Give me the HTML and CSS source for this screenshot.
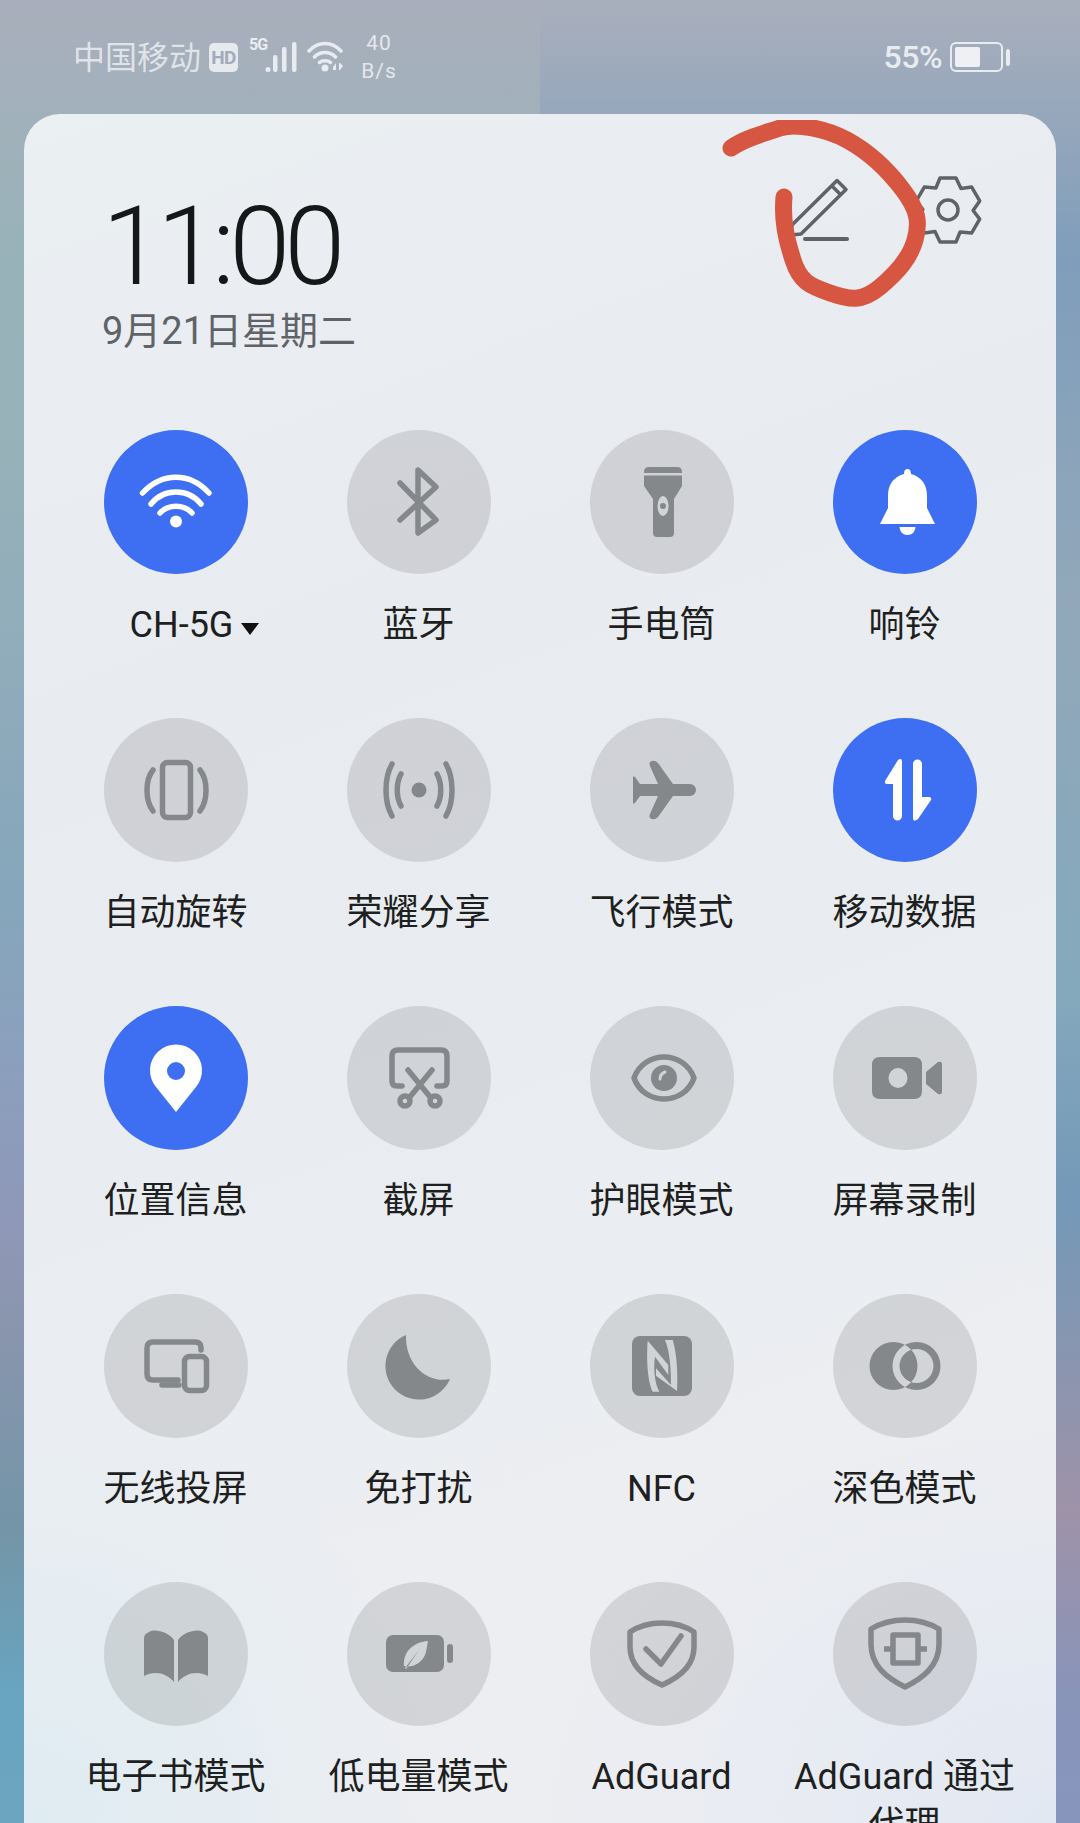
FILE: index.html
```html
<!DOCTYPE html>
<html>
<head>
  <title>控制中心</title>
  <link rel="stylesheet" href="styles.css">
</head>
<body>
  <div class="screen">
    <div class="status-bar">
      <span class="carrier">中国移动</span>
      <span class="hd">HD</span>
      <span class="net">5G</span>
      <svg class="signal" viewBox="0 0 32 32"><circle cx="3" cy="28.5" r="2.5"/><rect x="8" y="14" width="4.5" height="17" rx="2"/><rect x="17" y="6" width="4.5" height="25" rx="2"/><rect x="27" y="1" width="4.5" height="30" rx="2"/></svg>
      <svg class="wifi" viewBox="0 0 36 32"><path class="s-line" d="M2 10C11 0 25 0 34 10M7.500 16C13 10 23 10 28.500 16M12.500 21.500C15 19 21 19 23.500 21.500"/><circle cx="18" cy="27" r="3.500"/><path d="M26 26l3-4v7h-3zM32 22h1l3 3-3 4h-1z"/></svg>
      <span class="speed">40<br>B/s</span>
      <span class="right">
        <span class="percent">55%</span>
        <span class="battery"><span class="battery-level"></span></span>
        <span class="battery-tip"></span>
      </span>
    </div>

    <div class="panel">
      <div class="panel-head">
        <div class="clock">
          <div class="time">11:00</div>
          <div class="date">9月21日星期二</div>
        </div>
        <div class="tools">
          <svg class="tool" viewBox="0 0 72 72"><path d="M52 6.500L61 15.500 16 60 6 61 7 51ZM47 12L55.500 20.500"/><path class="thick" d="M20 65H62"/></svg>
          <svg class="tool" viewBox="-36 -36 72 72"><path d="M-8 -32H8L13 -21.500 23.700 -22.900 31.700 -9.100 25.100 .5 31.700 9.100 23.700 22.900 12.100 22 8 32H-8L-13 21.500 -23.700 22.900 -31.700 9.100 -25.100 -.5 -31.700 -9.100 -23.700 -22.900 -12.100 -22Z"/><circle r="10"/></svg>
        </div>
      </div>

      <div class="tiles">
        <div class="tile">
          <div class="btn on"><svg viewBox="0 0 144 144"><path class="line" d="M38.500 63C58 42 86 42 105 63M47 74C60 58 84 58 97 74M56 83C64 74 80 74 88 83"/><circle class="fill" cx="72" cy="91.500" r="6"/></svg></div>
          <div class="label wifi-label">CH-5G<span class="caret"></span></div>
        </div>
        <div class="tile">
          <div class="btn"><svg viewBox="0 0 144 144"><path class="line" d="M53 53L89 90 71 103V40L89 57 53 90"/></svg></div>
          <div class="label">蓝牙</div>
        </div>
        <div class="tile">
          <div class="btn"><svg viewBox="0 0 144 144"><path class="fill" d="M59 37H87Q92 37 92 42V43H54V42Q54 37 59 37ZM54 45.500H92V56L84 69V103Q84 107 80 107H67Q63 107 63 103V69L54 56Z"/><ellipse class="hole" cx="73" cy="76" rx="5.500" ry="10"/><circle class="fill" cx="73" cy="76" r="3"/></svg></div>
          <div class="label">手电筒</div>
        </div>
        <div class="tile">
          <div class="btn on"><svg viewBox="0 0 144 144"><path class="fill" d="M74.500 39Q78 39 78 44C89 47 94 55 94 66V78L102 94H47L55 78V66C55 55 60 47 71 44Q71 39 74.500 39Z"/><path class="fill" d="M66.500 97H82.500C82 102 79 105 74.500 105S67 102 66.500 97Z"/></svg></div>
          <div class="label">响铃</div>
        </div>

        <div class="tile">
          <div class="btn"><svg viewBox="0 0 144 144"><rect class="line" x="58.500" y="44.500" width="28" height="55" rx="5"/><path class="line" d="M49 52C41 62 41 82 49 93M96 52C104 62 104 82 96 93"/></svg></div>
          <div class="label">自动旋转</div>
        </div>
        <div class="tile">
          <div class="btn"><svg viewBox="0 0 144 144"><circle class="fill" cx="72" cy="72" r="7.500"/><path class="line" d="M54 56C49 65 49 79 54 88M90 56C95 65 95 79 90 88M45 46C37 60 37 84 45 98M99 46C107 60 107 84 99 98"/></svg></div>
          <div class="label">荣耀分享</div>
        </div>
        <div class="tile">
          <div class="btn"><svg viewBox="0 0 144 144"><path class="fill" d="M100 66A6 6 0 0 1 100 78H83L68 99Q64 103 60 100Q59 98 60 96L68 78H50L45 85Q43 87 43 84V60Q43 57 45 59L50 66H68L60 48Q59 45 60 44Q64 41 68 45L83 66Z"/></svg></div>
          <div class="label">飞行模式</div>
        </div>
        <div class="tile">
          <div class="btn on"><svg viewBox="0 0 144 144"><path class="fill" d="M69 44V98A4.500 4.500 0 0 1 60 98V66H54Q51 66 52 63L65 42Q69 39 69 44ZM80 46A4.500 4.500 0 0 1 89 46V79H96Q99 79 98 82L85 101Q80 105 80 100Z"/></svg></div>
          <div class="label">移动数据</div>
        </div>

        <div class="tile">
          <div class="btn on"><svg viewBox="0 0 144 144"><path class="fill" fill-rule="evenodd" d="M72 106L52 81A26 26 0 1 1 92 81ZM72 56A9 9 0 1 0 72 74A9 9 0 1 0 72 56Z"/></svg></div>
          <div class="label">位置信息</div>
        </div>
        <div class="tile">
          <div class="btn"><svg viewBox="0 0 144 144"><path class="line" d="M55 80H50Q45 80 45 75V50Q45 44 51 44H94Q100 44 100 50V75Q100 80 95 80H90"/><path class="line" d="M61 64L84 92M85 64L62 92"/><circle class="line" cx="58" cy="95" r="5"/><circle class="line" cx="88" cy="95" r="5"/></svg></div>
          <div class="label">截屏</div>
        </div>
        <div class="tile">
          <div class="btn"><svg viewBox="0 0 144 144"><path class="line" d="M44 72C54 44 94 44 104 72C94 100 54 100 44 72Z"/><circle class="fill" cx="74" cy="72" r="13"/><path class="hole-line" d="M70 73Q70 68 75 66"/></svg></div>
          <div class="label">护眼模式</div>
        </div>
        <div class="tile">
          <div class="btn"><svg viewBox="0 0 144 144"><path class="fill" fill-rule="evenodd" d="M47 51H81Q89 51 89 59V85Q89 93 81 93H47Q39 93 39 85V59Q39 51 47 51ZM65 62A9.500 10 0 1 0 65 82A9.500 10 0 1 0 65 62Z"/><path class="fill" d="M93 66L105 56Q109 55 109 58V86Q109 89 105 88L93 78Z"/></svg></div>
          <div class="label">屏幕录制</div>
        </div>

        <div class="tile">
          <div class="btn"><svg viewBox="0 0 144 144"><path class="line" d="M97 56V54Q97 48 91 48H49Q43 48 43 54V80Q43 86 49 86H74"/><path class="line" d="M58 91H75"/><rect class="line" x="80.500" y="62.500" width="22" height="34" rx="5"/></svg></div>
          <div class="label">无线投屏</div>
        </div>
        <div class="tile">
          <div class="btn"><svg viewBox="0 0 144 144"><path class="fill" d="M59 41A33.600 33.600 0 1 0 103 85C82 90 58 72 59 41Z"/></svg></div>
          <div class="label">免打扰</div>
        </div>
        <div class="tile">
          <div class="btn"><svg viewBox="0 0 144 144"><rect class="fill" x="42" y="42" width="60" height="60" rx="8"/><path class="hole" d="M57.700 46.700L78.300 71V81L65 62.700C63.500 72 64 88 69.300 97.700H62.700C57 86 56.500 62 57.700 46.700ZM66 74.300L81 91C81 75 80 58 75 46H82.700C87 60 88 80 87 97L66 81.700Z"/></svg></div>
          <div class="label">NFC</div>
        </div>
        <div class="tile">
          <div class="btn"><svg viewBox="0 0 144 144"><path class="fill" fill-rule="evenodd" d="M60.500 48A24 24 0 1 0 60.500 96A24 24 0 1 0 60.500 48ZM83.500 48A24 24 0 1 0 83.500 96A24 24 0 1 0 83.500 48ZM83.500 55A17 17 0 1 0 83.500 89A17 17 0 1 0 83.500 55Z"/></svg></div>
          <div class="label">深色模式</div>
        </div>

        <div class="tile">
          <div class="btn"><svg viewBox="0 0 144 144"><path class="fill" d="M70 58C65 50 50 46 45 50Q40 52 40 56V94C50 88 63 91 70 100ZM74 58C79 50 94 46 99 50Q104 52 104 56V94C94 88 81 91 74 100Z"/></svg></div>
          <div class="label">电子书模式</div>
        </div>
        <div class="tile">
          <div class="btn"><svg viewBox="0 0 144 144"><rect class="fill" x="39" y="53" width="58" height="37" rx="7"/><rect class="fill" x="100" y="62" width="6" height="19" rx="3"/><path class="hole" d="M81 59C68 60 56 68 57 84C64 86 76 82 79 70ZM58 86L72 68 59 87Z"/></svg></div>
          <div class="label">低电量模式</div>
        </div>
        <div class="tile">
          <div class="btn"><svg viewBox="0 0 144 144"><path class="line" d="M40 50C58 38 86 38 104 50V65C104 85 88 96 72 103C56 96 40 85 40 65Z"/><path class="line" d="M56 67L71 82 91 54"/></svg></div>
          <div class="label">AdGuard</div>
        </div>
        <div class="tile">
          <div class="btn"><svg viewBox="0 0 144 144"><path class="line" d="M38 47C58 35 86 35 106 47V62C106 84 90 96 72 105C54 96 38 84 38 62Z"/><rect class="line" x="60" y="53" width="25" height="28"/><path class="line flat" d="M51 67H60M85 67H94"/></svg></div>
          <div class="label">AdGuard 通过代理</div>
        </div>
      </div>
    </div>

    <!-- hand drawn mark on the screenshot -->
    <svg class="scribble" viewBox="720 120 210 190"><path d="M731 148C745 138 765 133 780 128S825 128 847 140S888 170 903 190S920 222 915 240S898 272 880 287S850 300 830 293S800 282 793 260S782 220 784 197"/></svg>
  </div>
</body>
</html>
```

FILE: styles.css
```css
html, body {
  margin: 0;
  height: 100%;
}

body {
  font-family: Roboto, "Noto Sans CJK SC", sans-serif;
  overflow: hidden;
}

.screen {
  position: relative;
  width: 1080px;
  height: 1823px;
  display: flex;
  flex-direction: column;
  overflow: hidden;
  background:
    linear-gradient(180deg, #a9afbc 0, rgba(169, 175, 188, 0) 260px),
    linear-gradient(180deg, #97b2b8 0, #97b2b8 420px, #8fabbb 700px, #85a6bb 900px, #8ba0bd 1050px, #8f98b8 1220px, #8a95ae 1320px, #7495a7 1530px, #69a4c0 1690px, #6ba5c0 100%) left / 540px 100% no-repeat,
    linear-gradient(180deg, #7f9dbb 0, #7f9dbb 250px, #92a8ba 600px, #85a9bc 980px, #7499b8 1200px, #9e92a8 1510px, #8994b9 1695px, #8795bd 100%) right / 540px 100% no-repeat;
}

.status-bar {
  height: 114px;
  flex: none;
  box-sizing: border-box;
  padding: 0 70px 0 73px;
  display: flex;
  align-items: center;
  color: rgba(255, 255, 255, 0.78);
}

.carrier {
  font-size: 32px;
  line-height: 40px;
  margin-top: 1px;
  color: rgba(255, 255, 255, 0.66);
}

.hd {
  width: 29px;
  height: 29px;
  margin-left: 8px;
  border-radius: 5px;
  background: #e6e9ee;
  color: #a1abba;
  font-size: 19px;
  font-weight: 700;
  line-height: 29px;
  text-align: center;
  letter-spacing: -0.5px;
}

.net {
  font-size: 16px;
  font-weight: 700;
  line-height: 16px;
  margin: -24px 0 0 11px;
  width: 17px;
  letter-spacing: -1px;
}

.signal {
  width: 32px;
  height: 32px;
  margin-left: -1px;
  fill: #e8ebef;
}

.wifi {
  width: 36px;
  height: 32px;
  margin-left: 10px;
  fill: #e8ebef;
}

.s-line {
  fill: none;
  stroke: #e8ebef;
  stroke-width: 3.500;
  stroke-linecap: round;
}

.speed {
  width: 50px;
  margin-left: 11px;
  font-size: 21px;
  line-height: 28px;
  text-align: center;
  letter-spacing: 1px;
  color: #e4e7ec;
}

.right {
  margin-left: auto;
  display: flex;
  align-items: center;
}

.percent {
  font-size: 32px;
  font-weight: 500;
  color: #e8ebef;
  margin-right: 8px;
  letter-spacing: -0.5px;
}

.battery {
  width: 53px;
  height: 30px;
  box-sizing: border-box;
  border: 2.500px solid #e8ebef;
  border-radius: 6px;
  padding: 3px;
}

.battery-level {
  display: block;
  width: 25px;
  height: 100%;
  border-radius: 2px;
  background: #eef0f4;
}

.battery-tip {
  width: 4px;
  height: 17px;
  margin-left: 3px;
  border-radius: 2px;
  background: #e8ebef;
}

.panel {
  flex: 1;
  margin: 0 24px;
  border-radius: 36px 36px 0 0;
  overflow: hidden;
  background:
    radial-gradient(420px 420px at 0 100%, #dfecf2 0, rgba(223, 236, 242, 0) 100%),
    radial-gradient(520px 400px at 100% 100%, #e2e8f2 0, rgba(226, 232, 242, 0) 100%),
    linear-gradient(160deg, #ebf0f3 0, #e8ebf0 30%, #e9edf1 55%, #eceef2 78%, #eeeef2 100%);
}

.panel-head {
  height: 316px;
  box-sizing: border-box;
  padding: 60px 72px 0 78px;
  display: flex;
  justify-content: space-between;
}

.time {
  margin-top: 14px;
  font-size: 110px;
  font-weight: 300;
  line-height: 118px;
  letter-spacing: -6px;
  color: #161718;
}

.date {
  margin-top: 0;
  font-size: 38px;
  line-height: 50px;
  color: #5f6367;
}

.tools {
  display: flex;
  gap: 55px;
}

.tool {
  width: 72px;
  height: 72px;
  fill: none;
  stroke: #5f6266;
  stroke-width: 3.500;
  stroke-linejoin: round;
}

.thick {
  stroke-width: 4;
  stroke-linecap: round;
}

.tiles {
  padding-left: 30px;
  display: grid;
  grid-template-columns: repeat(4, 243px);
  grid-auto-rows: 288px;
}

.tile {
  display: flex;
  flex-direction: column;
  align-items: center;
}

.btn {
  width: 144px;
  height: 144px;
  border-radius: 50%;
  background: rgba(60, 60, 60, 0.14);
}

.btn svg {
  display: block;
  width: 144px;
  height: 144px;
}

.fill {
  fill: #85888a;
}

.hole {
  fill: #d1d4d6;
}

.hole-line {
  fill: none;
  stroke: #d1d4d6;
  stroke-width: 3;
  stroke-linecap: round;
}

.line {
  fill: none;
  stroke: #85888a;
  stroke-width: 5.500;
  stroke-linecap: round;
  stroke-linejoin: round;
}

.flat {
  stroke-linecap: butt;
}

.btn.on {
  background: #3e6ff3;
}

.btn.on .fill {
  fill: #fff;
}

.btn.on .line {
  stroke: #fff;
}

.label {
  margin-top: 27px;
  font-size: 36px;
  line-height: 48px;
  text-align: center;
  color: #1e1f20;
}

.wifi-label {
  padding-left: 38px;
  display: flex;
  align-items: center;
}

.caret {
  margin: 8px 0 0 8px;
  border-left: 9px solid transparent;
  border-right: 9px solid transparent;
  border-top: 12px solid #111;
}

.scribble {
  position: absolute;
  left: 720px;
  top: 120px;
  width: 210px;
  height: 190px;
  fill: none;
  stroke: #d65642;
  stroke-width: 17;
  stroke-linecap: round;
  stroke-linejoin: round;
}
```
